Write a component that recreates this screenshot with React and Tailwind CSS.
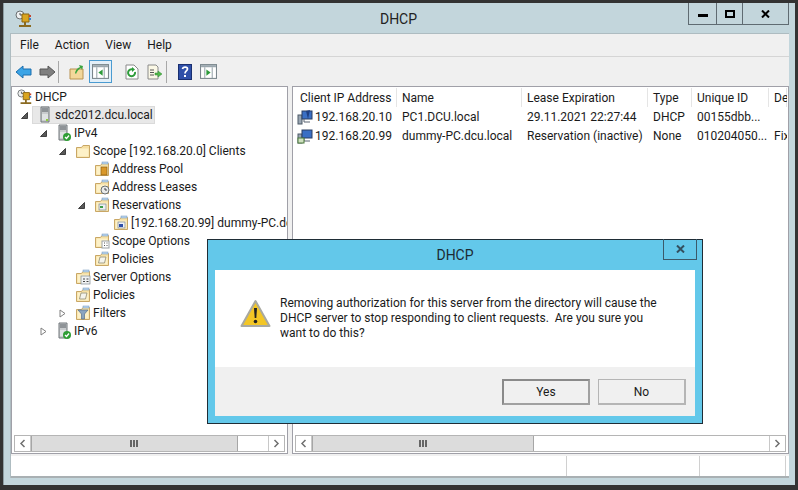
import React from "react";

const font = { fontFamily: 'Roboto, "Open Sans", sans-serif' };

// small drawings for the MMC tree
const Folder = ({ children, plain }) => (
  <svg width="16" height="16" viewBox="0 0 16 16" className="shrink-0">
    <path d="M1.5 4.5 V14.5 H14.5 V2.5 H8 L6.5 4.5 Z" fill="#f6dfa2" stroke="#c9a765" />
    <path d="M2.5 5.5 H13.5 V13.5 H2.5 Z" fill="#fdf1c8" />
    {!plain && <rect x="8" y="1" width="6" height="2" fill="#bcd6ef" stroke="#6e93bb" strokeWidth="0.5" />}
    {children}
  </svg>
);

const Server = ({ check }) => (
  <svg width="16" height="18" viewBox="0 0 16 18" className="shrink-0">
    <path d="M3 1 H11 V16 H3 Z" fill="#c8cbcd" stroke="#70767a" />
    <path d="M4 3 H10 M4 5 H10" stroke="#565d62" />
    <path d="M4 8 H10 V14 H4 Z" fill="#dfe2e3" />
    {check ? (
      <>
        <circle cx="11" cy="13" r="4" fill="#2f9e35" />
        <path d="M9 13 L10.5 14.5 L13 11.5" stroke="#fff" strokeWidth="1.3" fill="none" />
      </>
    ) : (
      <rect x="8" y="13" width="2" height="2" fill="#8fd03a" />
    )}
  </svg>
);

const DhcpIcon = ({ size = 18 }) => (
  <svg width={size} height={size} viewBox="0 0 18 18" className="shrink-0">
    <circle cx="5" cy="5" r="4" fill="#eef0f0" stroke="#6b7072" />
    <path d="M5 3 V5 H7" stroke="#555" fill="none" />
    <path d="M7 4 H14 V12 H7 Z" fill="#d9a520" stroke="#8a6410" />
    <rect x="14" y="5" width="2" height="2" fill="#c8452f" />
    <rect x="14" y="8" width="2" height="2" fill="#3c7fc8" />
    <path d="M10 12 V15 M4 16 H16" stroke="#8a6a20" strokeWidth="2" />
  </svg>
);

const Twisty = ({ open }) => (
  <svg width="9" height="9" viewBox="0 0 9 9" className="shrink-0">
    {open ? (
      <path d="M1.5 7.5 H7.5 V1.5 Z" fill="#595959" stroke="#404040" />
    ) : (
      <path d="M2 1 L7 4.5 L2 8 Z" fill="#fff" stroke="#808080" />
    )}
  </svg>
);

const Row = ({ left, twisty, icon, label, selected, root }) => (
  <div className="flex items-center h-[18px] whitespace-nowrap" style={{ paddingLeft: left }}>
    {!root && (
      <span className={`w-[12px] shrink-0 flex items-center ${selected ? "" : "-ml-[3px] pr-[3px] box-content"}`}>
        {twisty !== undefined && <Twisty open={twisty} />}
      </span>
    )}
    {selected ? (
      <span className="flex items-center bg-[#e8e8e8] border border-[#dadada] h-[18px] pr-[1px] pl-[3px]">
        <span className="w-[19px] shrink-0 flex justify-center">{icon}</span>
        <span>{label}</span>
      </span>
    ) : (
      <>
        <span className="w-[19px] shrink-0 flex justify-center">{icon}</span>
        <span className="pl-[1px]">{label}</span>
      </>
    )}
  </div>
);

const Scrollbar = ({ thumb, track }) => (
  <div className="flex h-[17px] mx-[2px] border border-[#b5b5b5] bg-white">
    <div className="w-[16px] flex items-center justify-center border-r border-[#c8c8c8]">
      <svg width="7" height="9" viewBox="0 0 7 9"><path d="M5.5 1 L2 4.5 L5.5 8" stroke="#6f6f6f" strokeWidth="1.5" fill="none" /></svg>
    </div>
    <div className="bg-[#dcdcdc] border-x border-[#a6a6a6] flex items-center justify-center gap-[1px]" style={{ width: thumb }}>
      <span className="w-[2px] h-[7px] bg-[#666]" />
      <span className="w-[2px] h-[7px] bg-[#666]" />
      <span className="w-[2px] h-[7px] bg-[#666]" />
    </div>
    <div style={{ width: track }} />
    <div className="w-[16px] flex items-center justify-center border-l border-[#c8c8c8] ml-auto">
      <svg width="7" height="9" viewBox="0 0 7 9"><path d="M1.5 1 L5 4.5 L1.5 8" stroke="#6f6f6f" strokeWidth="1.5" fill="none" /></svg>
    </div>
  </div>
);

const columns = [
  ["Client IP Address", 102],
  ["Name", 125],
  ["Lease Expiration", 126],
  ["Type", 44],
  ["Unique ID", 77],
  ["De", 18],
];

const leases = [
  { ip: "192.168.20.10", name: "PC1.DCU.local", exp: "29.11.2021 22:27:44", type: "DHCP", id: "00155dbb...", desc: "", kind: "lease" },
  { ip: "192.168.20.99", name: "dummy-PC.dcu.local", exp: "Reservation (inactive)", type: "None", id: "010204050...", desc: "Fix", kind: "res" },
];

const PcIcon = ({ kind }) => (
  <svg width="16" height="16" viewBox="0 0 16 16" className="shrink-0">
    <rect x="1" y="6" width="4" height="9" fill="#9aa6b2" stroke="#4d5a68" />
    <rect x="5" y="2" width="10" height="8" fill="#3a6fc4" stroke="#2b3f63" />
    <path d="M7 10 V13 H13" stroke="#5a6572" fill="none" />
    {kind === "lease" ? (
      <path d="M9 2 L13 1 L11 10 Z" fill="#1f3f82" />
    ) : (
      <rect x="1" y="10" width="6" height="5" fill="#cfe0c0" stroke="#4c7a3c" />
    )}
  </svg>
);

const ToolButton = ({ children, active }) => (
  <div className={`w-[23px] h-[23px] flex items-center justify-center ${active ? "border border-[#4a9bd1] bg-[#e3eff8]" : ""}`}>
    {children}
  </div>
);

const Sep = () => <div className="w-px h-[22px] bg-[#a8a8a8]" />;

const PaneIcon = ({ right }) => (
  <svg width="17" height="15" viewBox="0 0 16 14">
    <rect x="0.5" y="0.5" width="15" height="13" fill="#fff" stroke="#7a868c" />
    <rect x="1" y="1" width="14" height="2" fill="#9aa6ad" />
    <path d="M4.5 3 V13 M11.5 3 V13" stroke="#9aa6ad" />
    <path d={right ? "M6 5 L10 8 L6 11 Z" : "M10 5 L6 8 L10 11 Z"} fill="#2c9a3a" />
  </svg>
);

export default function App() {
  return (
    <div className="relative w-[798px] h-[490px] overflow-hidden bg-[#333333] pl-[3px] pr-[3px] pt-[3px] pb-[5px] text-[12px] text-[#1a1a1a]" style={font}>
      <div className="h-full bg-[#c3d6dc] border-l border-[#8e9ea3] flex flex-col">
        {/* title bar */}
        <div className="relative h-[30px] shrink-0 flex items-center">
          <div className="ml-[11px] mt-[1px]"><DhcpIcon /></div>
          <div className="absolute left-[0] right-[0] top-[6px] text-center text-[14px] text-[#222] pr-[2px]">DHCP</div>
          <div className="absolute right-[6px] top-0 flex h-[22px] border border-t-0 border-[#5f6b72]">
            <div className="w-[28px] flex items-center justify-center border-r border-[#5f6b72]">
              <span className="w-[10px] h-[3px] bg-black mt-[4px]" />
            </div>
            <div className="w-[26px] flex items-center justify-center border-r border-[#5f6b72]">
              <span className="w-[10px] h-[8px] border-2 border-black" />
            </div>
            <div className="w-[45px] flex items-center justify-center">
              <svg width="9" height="8" viewBox="0 0 9 8"><path d="M1 0.5 L8 7.5 M8 0.5 L1 7.5" stroke="#000" strokeWidth="2" /></svg>
            </div>
          </div>
        </div>

        {/* client area */}
        <div className="ml-[6px] mr-[6px] flex-1 flex flex-col bg-[#f0f0f0] border-t border-l border-[#aebcc1] min-h-0">
          <div className="h-[23px] flex items-center gap-[16px] pl-[9px] text-[12px] shrink-0 border-b border-[#d5d5d5]">
            <span>File</span>
            <span>Action</span>
            <span>View</span>
            <span>Help</span>
          </div>
          <div className="h-[29px] flex items-center pl-[1px] shrink-0">
            <ToolButton>
              <svg width="18" height="14" viewBox="0 0 18 14"><path d="M1 7 L8 1 V4 H16 V10 H8 V13 Z" fill="#3ba4e6" stroke="#1d6fae" /></svg>
            </ToolButton>
            <ToolButton>
              <svg width="18" height="14" viewBox="0 0 18 14"><path d="M17 7 L10 1 V4 H2 V10 H10 V13 Z" fill="#7f7f7f" stroke="#565656" /></svg>
            </ToolButton>
            <Sep />
            <div className="w-[6px]" />
            <ToolButton>
              <svg width="16" height="16" viewBox="0 0 16 16">
                <path d="M1 5 H14 V15 H1 Z" fill="#f3d79a" stroke="#b99250" />
                <path d="M6 9 C7 5 9 4 11 3 L10 1 L14 2 L13 6 L12 4 C10 5 8 7 7 10 Z" fill="#3aa43f" />
              </svg>
            </ToolButton>
            <div className="w-[1px]" />
            <ToolButton active><PaneIcon /></ToolButton>
            <div className="w-[8px]" />
            <ToolButton>
              <svg width="14" height="16" viewBox="0 0 14 16">
                <path d="M1 1 H9 L13 5 V15 H1 Z" fill="#fff" stroke="#8a8a8a" />
                <path d="M10 8 A3.5 3.5 0 1 1 8 5.5" stroke="#2e9c3a" strokeWidth="2" fill="none" />
                <path d="M7 3 L10 5.5 L7 8 Z" fill="#2e9c3a" />
              </svg>
            </ToolButton>
            <ToolButton>
              <svg width="16" height="16" viewBox="0 0 16 16">
                <path d="M1 1 H9 L11 3 V15 H1 Z" fill="#fbf8e6" stroke="#8a8a8a" />
                <path d="M3 6 H7 M3 8.5 H7 M3 11 H7" stroke="#555" />
                <path d="M8 9 H11 V7 L15 10 L11 13 V11 H8 Z" fill="#53b84a" stroke="#2f8a33" strokeWidth="0.5" />
              </svg>
            </ToolButton>
            <Sep />
            <div className="w-[6px]" />
            <ToolButton>
              <svg width="14" height="16" viewBox="0 0 14 16">
                <rect width="14" height="16" fill="#2f4fa8" />
                <rect x="0.5" y="0.5" width="13" height="15" fill="none" stroke="#1a2f70" />
                <path d="M4.5 5 C5 2.5 9.5 2.5 9.5 5 C9.5 7 7 7 7 9.5" stroke="#fff" strokeWidth="1.7" fill="none" />
                <rect x="6" y="11" width="2" height="2" fill="#fff" />
              </svg>
            </ToolButton>
            <div className="w-[1px]" />
            <ToolButton><PaneIcon right /></ToolButton>
          </div>

          <div className="flex-1 flex gap-[4px] min-h-0">
            {/* tree pane */}
            <div className="w-[277px] bg-white border border-[#a0a0a8] flex flex-col">
              <div className="flex-1 pt-[1px] overflow-hidden min-h-0">
                <Row root left={3} icon={<DhcpIcon size={16} />} label="DHCP" />
                <Row left={8} twisty icon={<Server />} label="sdc2012.dcu.local" selected />
                <Row left={30} twisty icon={<Server check />} label="IPv4" />
                <Row left={49} twisty icon={<Folder plain />} label="Scope [192.168.20.0] Clients" />
                <Row left={68} icon={<Folder><rect x="7" y="6" width="6" height="8" fill="#d9982b" stroke="#8a5d10" strokeWidth="0.7" /></Folder>} label="Address Pool" />
                <Row left={68} icon={<Folder><circle cx="11" cy="11" r="4" fill="#e8eaea" stroke="#6a6f72" /><path d="M11 9 V11 H13" stroke="#444" fill="none" /></Folder>} label="Address Leases" />
                <Row left={68} twisty icon={<Folder><rect x="5" y="7" width="7" height="6" fill="#eceff2" stroke="#7d8890" strokeWidth="0.7" /><rect x="6" y="9" width="3" height="2" fill="#3f9e4a" /></Folder>} label="Reservations" />
                <Row left={87} icon={<Folder><rect x="5" y="7" width="7" height="6" fill="#eef1f7" stroke="#7d8890" strokeWidth="0.7" /><rect x="6" y="9" width="4" height="3" fill="#2e4fa8" /></Folder>} label="[192.168.20.99] dummy-PC.dcu.local" />
                <Row left={68} icon={<Folder><rect x="8" y="8" width="7" height="7" fill="#fff" stroke="#9aa0a4" /><path d="M10 10 H11 M12.5 10 H13.5 M10 12.5 H11 M12.5 12.5 H13.5" stroke="#555" /></Folder>} label="Scope Options" />
                <Row left={68} icon={<Folder><path d="M6 6 H12 L10.5 12 H4.5 Z" fill="#f4f4ee" stroke="#8f8a70" strokeWidth="0.8" /></Folder>} label="Policies" />
                <Row left={49} icon={<Folder><rect x="6" y="7" width="9" height="8" fill="#f0f2f3" stroke="#7d8890" strokeWidth="0.7" /><path d="M8 10 H10 M11.5 10 H13.5 M8 12.5 H10 M11.5 12.5 H13.5" stroke="#444" /></Folder>} label="Server Options" />
                <Row left={49} icon={<Folder><path d="M6 6 H12 L10.5 12 H4.5 Z" fill="#f4f4ee" stroke="#8f8a70" strokeWidth="0.8" /></Folder>} label="Policies" />
                <Row left={49} twisty={false} icon={<Folder><path d="M3 5 H13 L9.5 9 V14 H6.5 V9 Z" fill="#8aa4c0" stroke="#56708c" strokeWidth="0.7" /></Folder>} label="Filters" />
                <Row left={30} twisty={false} icon={<Server check />} label="IPv6" />
              </div>
              <div className="pb-[1px]"><Scrollbar thumb={209} track={31} /></div>
            </div>

            {/* results pane */}
            <div className="flex-1 bg-white border border-[#a0a0a8] flex flex-col min-w-0">
              <div className="flex-1 overflow-hidden min-h-0 pl-[2px] pt-[1px]">
                <div className="flex h-[19px] w-[492px] overflow-hidden">
                  {columns.map(([title, w]) => (
                    <div key={title} className="shrink-0 h-full flex items-center pl-[5px] border-r border-[#e5e5e5] whitespace-nowrap" style={{ width: w }}>
                      {title}
                    </div>
                  ))}
                </div>
                {leases.map((l) => (
                  <div key={l.ip} className="flex h-[19px] w-[492px] items-center overflow-hidden whitespace-nowrap">
                    <div className="w-[102px] shrink-0 flex items-center gap-[2px] pl-[2px]"><PcIcon kind={l.kind} />{l.ip}</div>
                    <div className="w-[125px] shrink-0 pl-[5px]">{l.name}</div>
                    <div className="w-[126px] shrink-0 pl-[5px]">{l.exp}</div>
                    <div className="w-[44px] shrink-0 pl-[5px]">{l.type}</div>
                    <div className="w-[77px] shrink-0 pl-[5px]">{l.id}</div>
                    <div className="w-[18px] shrink-0 pl-[5px] overflow-hidden">{l.desc}</div>
                  </div>
                ))}
              </div>
              <div className="pb-[1px]"><Scrollbar thumb={222} track={222} /></div>
            </div>
          </div>

          {/* status bar */}
          <div className="h-[22px] mt-[2px] shrink-0 bg-white border-b-2 border-[#a9b0b3] flex">
            <div className="w-[556px] border-r border-[#d0d0d0]" />
            <div className="w-[133px] border-r border-[#d0d0d0]" />
            <div className="w-[86px] border-r border-[#d0d0d0]" />
          </div>
        </div>
        <div className="h-[7px] shrink-0" />
      </div>

      {/* message box */}
      <div className="absolute left-[207px] top-[239px] w-[496px] h-[185px] bg-[#63c8ea] border border-[#1f2d36] flex flex-col px-[7px] pb-[7px]">
        <div className="relative h-[30px] shrink-0 flex items-center justify-center text-[14px] text-[#1d2b33]">
          DHCP
          <div className="absolute right-[-2px] top-[-1px] w-[34px] h-[21px] border border-t-0 border-[#3b5a6a] flex items-center justify-center">
            <svg width="9" height="8" viewBox="0 0 9 8"><path d="M1 0.5 L8 7.5 M8 0.5 L1 7.5" stroke="#33505f" strokeWidth="2" /></svg>
          </div>
        </div>
        <div className="flex-1 flex flex-col bg-white">
          <div className="h-[97px] shrink-0 flex pl-[25px] pt-[26px] gap-[9px]">
            <svg width="31" height="29" viewBox="0 0 31 29" className="shrink-0 mt-[3px]">
              <path d="M15.5 2 L29.5 27 H1.5 Z" fill="#f3c625" stroke="#a9a9a0" strokeWidth="2" strokeLinejoin="round" />
              <path d="M14 9 H17 L16.3 19 H14.7 Z" fill="#222" />
              <circle cx="15.5" cy="22.5" r="1.8" fill="#222" />
            </svg>
            <p className="w-[380px] leading-[15px] text-[12px] text-[#1a1a1a]">
              Removing authorization for this server from the directory will cause the DHCP server to stop responding to client requests.&nbsp; Are you sure you want to do this?
            </p>
          </div>
          <div className="flex-1 bg-[#f0f0f0] flex justify-end items-start gap-[8px] pt-[12px] pr-[9px]">
            <button className="w-[88px] h-[26px] bg-[#f0f0f0] border-2 border-[#a0a0a0] border-t-[#8a8a8a] border-l-[#8a8a8a] text-[12px]" style={font}>Yes</button>
            <button className="w-[88px] h-[26px] bg-[#f0f0f0] border border-[#b5b5b5] border-b-2 border-r-2 text-[12px]" style={font}>No</button>
          </div>
        </div>
      </div>
    </div>
  );
}
